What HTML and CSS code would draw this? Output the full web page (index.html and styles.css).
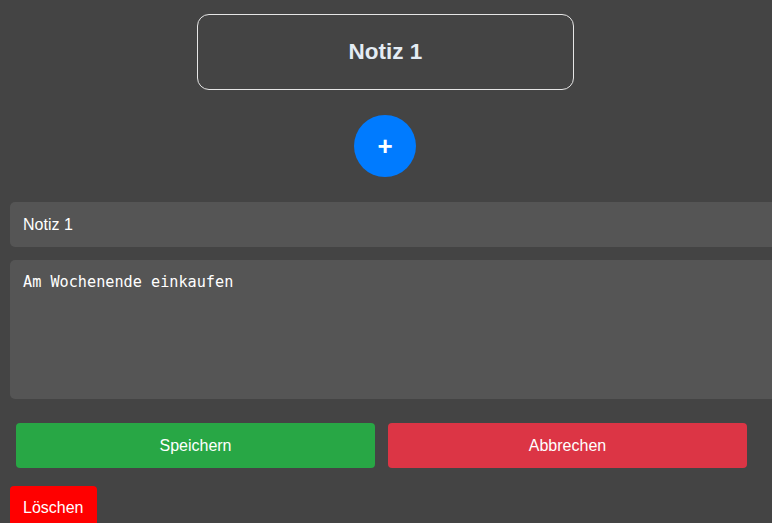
FILE: index.html
```html
<!DOCTYPE html>
<html lang="de">
<head>
<meta charset="utf-8">
<link rel="stylesheet" href="styles.css">
</head>
<body>
<div class="page">
  <div class="note-card"><h2 class="note-title">Notiz 1</h2></div>
  <button class="add-btn">+</button>
  <input class="title-input" type="text" value="Notiz 1">
  <textarea class="body-input">Am Wochenende einkaufen</textarea>
  <div class="actions">
    <button class="btn btn-save">Speichern</button>
    <button class="btn btn-cancel">Abbrechen</button>
  </div>
  <button class="btn-delete">Löschen</button>
</div>
</body>
</html>
```
FILE: styles.css
```css
html, body {
  margin: 0;
  padding: 0;
  background: #444444;
  overflow: hidden;
  height: 100%;
}
body {
  font-family: "Liberation Sans", Arial, sans-serif;
}
.page {
  padding: 14px 0 0 10px;
  display: flex;
  flex-direction: column;
}
.note-card {
  align-self: flex-start;
  margin-left: 187px;
  width: 375px;
  height: 74px;
  border: 1px solid #e6e6e6;
  border-radius: 12px;
  display: flex;
  align-items: center;
  justify-content: center;
}
.note-title {
  margin: 0;
  font-size: 22.5px;
  font-weight: bold;
  color: #e4ecf4;
}
.add-btn {
  align-self: flex-start;
  margin: 25px 0 0 344px;
  width: 62px;
  height: 62px;
  border-radius: 50%;
  border: none;
  background: #007bff;
  color: #fff;
  font-family: "Liberation Sans", Arial, sans-serif;
  font-size: 26px;
  font-weight: bold;
  padding: 0;
  line-height: 62px;
}
.title-input {
  margin-top: 25px;
  width: 780px;
  height: 45px;
  box-sizing: border-box;
  padding: 0 13px;
  border: none;
  border-radius: 5px;
  background: #555555;
  color: #ffffff;
  font-family: "Liberation Sans", Arial, sans-serif;
  font-size: 16px;
  outline: none;
}
.body-input {
  margin-top: 13px;
  width: 780px;
  height: 139px;
  box-sizing: border-box;
  padding: 12px 13px;
  border: none;
  border-radius: 5px;
  background: #555555;
  color: #ffffff;
  font-family: "DejaVu Sans Mono", monospace;
  font-size: 15.2px;
  line-height: 20px;
  resize: none;
  outline: none;
}
.actions {
  display: flex;
  gap: 13px;
  margin-top: 24px;
  padding-left: 6px;
}
.btn {
  width: 359px;
  height: 45px;
  border: none;
  border-radius: 4px;
  color: #ffffff;
  font-family: "Liberation Sans", Arial, sans-serif;
  font-size: 16px;
}
.btn-save { background: #28a745; }
.btn-cancel { background: #dc3545; }
.btn-delete {
  align-self: flex-start;
  margin-top: 18px;
  height: 44px;
  padding: 0 13px;
  border: none;
  border-radius: 4px;
  background: #ff0000;
  color: #ffffff;
  font-family: "Liberation Sans", Arial, sans-serif;
  font-size: 16px;
}
```
